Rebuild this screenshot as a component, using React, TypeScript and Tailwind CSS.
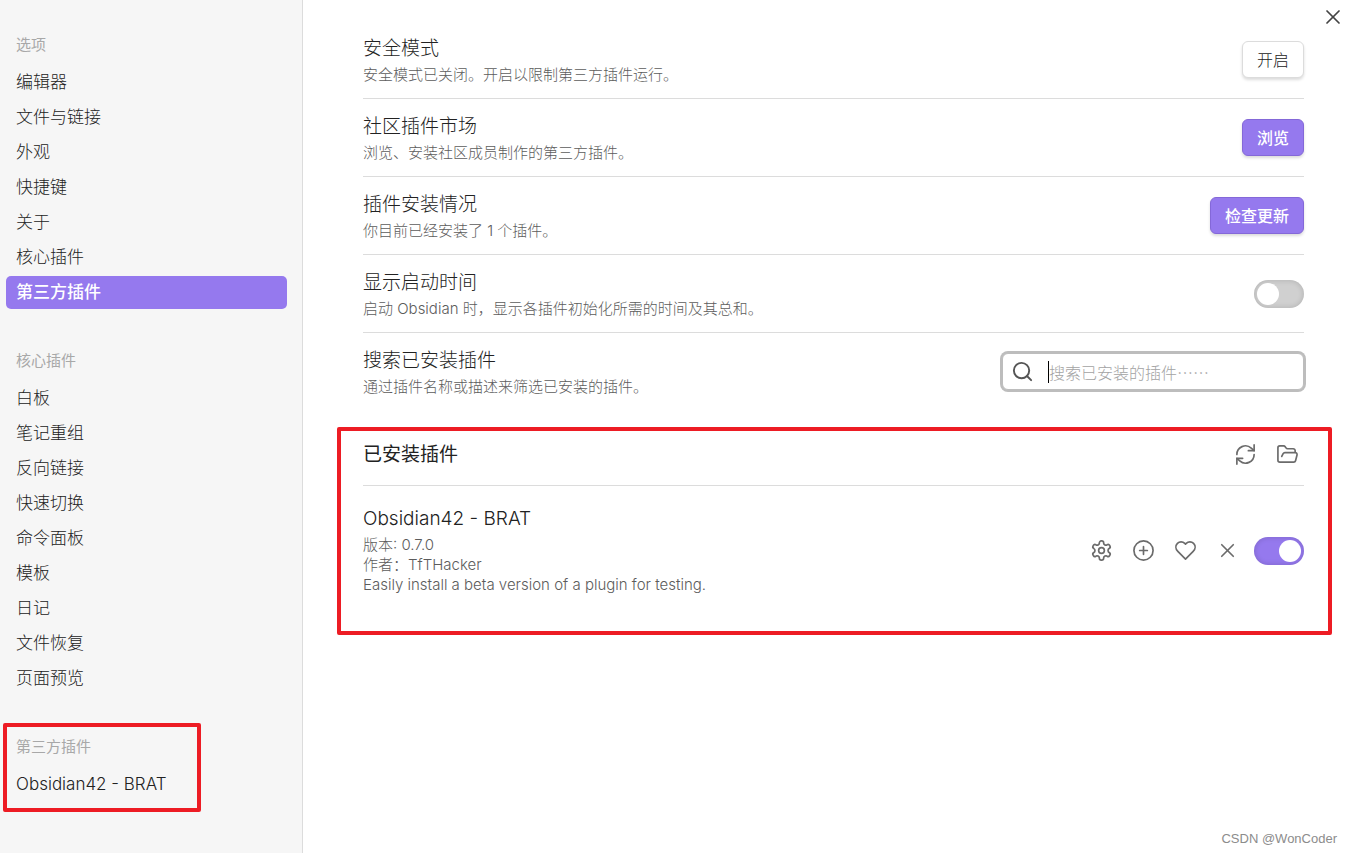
import { useState } from "react";
import type { ReactNode } from "react";
import { CirclePlus, Search, X } from "lucide-react";

const optionTabs = ["编辑器", "文件与链接", "外观", "快捷键", "关于", "核心插件", "第三方插件"];
const coreTabs = ["白板", "笔记重组", "反向链接", "快速切换", "命令面板", "模板", "日记", "文件恢复", "页面预览"];

function NavItem({ label, active, onSelect }: { label: string; active: boolean; onSelect: () => void }) {
  return (
    <li>
      <button
        type="button"
        onClick={onSelect}
        className={
          active
            ? "block h-[33px] w-full rounded-[5px] bg-[#9579ee] px-[10px] text-left text-[17px] leading-[33px] font-medium text-white"
            : "block h-[33px] w-full rounded-[5px] px-[10px] text-left text-[17px] leading-[33px] text-[#222222]"
        }
      >
        {label}
      </button>
    </li>
  );
}

function NavTitle({ children }: { children: ReactNode }) {
  return <h2 className="mb-[9px] px-[10px] text-[15px] leading-6 font-normal text-[#a8a8a8]">{children}</h2>;
}

function SettingRow({
  title,
  desc,
  last,
  children,
}: {
  title: string;
  desc: string;
  last?: boolean;
  children: ReactNode;
}) {
  return (
    <div className={last ? "flex items-center gap-4" : "flex items-center gap-4 border-b border-[#dcdcdc]"}>
      <div className="min-w-0 flex-1 pt-4 pb-[11px]">
        <h3 className="text-[19px] leading-6 font-light text-[#222222]">{title}</h3>
        <p className="mt-[2px] text-[15px] leading-6 text-[#5c5c5c]">{desc}</p>
      </div>
      {children}
    </div>
  );
}

function Toggle({ label, checked, onChange }: { label: string; checked: boolean; onChange: (v: boolean) => void }) {
  return (
    <label className="relative block h-7 w-[50px] shrink-0">
      <input
        type="checkbox"
        role="switch"
        aria-label={label}
        checked={checked}
        onChange={(e) => onChange(e.target.checked)}
        className="block h-7 w-[50px] appearance-none rounded-full bg-[#d0d0d0] shadow-[inset_0_0_5px_1px_rgba(0,0,0,0.12)] checked:bg-[#9579ee]"
      />
      <span
        className={
          checked
            ? "pointer-events-none absolute top-[3px] left-[25px] h-[22px] w-[22px] rounded-full bg-white"
            : "pointer-events-none absolute top-[3px] left-[3px] h-[22px] w-[22px] rounded-full bg-white"
        }
      />
    </label>
  );
}

function IconButton({ label, children }: { label: string; children: ReactNode }) {
  return (
    <button type="button" aria-label={label} className="flex h-[30px] w-[30px] items-center justify-center text-[#6b6b6b]">
      {children}
    </button>
  );
}

function Glyph({ children }: { children: ReactNode }) {
  return (
    <svg
      viewBox="0 0 24 24"
      className="h-[23px] w-[23px]"
      fill="none"
      stroke="currentColor"
      strokeWidth={1.75}
      strokeLinecap="round"
      strokeLinejoin="round"
      aria-hidden="true"
    >
      {children}
    </svg>
  );
}

const ctaClass =
  "h-[37px] shrink-0 rounded-[6px] border border-[#8468d8] bg-[#9579ee] px-[14px] text-[16px] leading-6 font-medium text-white shadow-[0_2px_3px_rgba(0,0,0,0.14)]";

export default function App() {
  const [tab, setTab] = useState("第三方插件");
  const [startup, setStartup] = useState(false);
  const [brat, setBrat] = useState(true);
  const [query, setQuery] = useState("");

  return (
    <div className="relative flex min-h-screen bg-white font-['Inter','Noto_Sans_CJK_SC',sans-serif] font-light text-[#222222]">
      <nav className="w-[303px] shrink-0 border-r border-[#dcdcdc] bg-[#f6f6f6] pt-[33px] pr-[15px] pl-[6px]">
        <section>
          <NavTitle>选项</NavTitle>
          <ul className="flex flex-col gap-[2px]">
            {optionTabs.map((t) => (
              <NavItem key={t} label={t} active={tab === t} onSelect={() => setTab(t)} />
            ))}
          </ul>
        </section>
        <section className="mt-10">
          <NavTitle>核心插件</NavTitle>
          <ul className="flex flex-col gap-[2px]">
            {coreTabs.map((t) => (
              <NavItem key={t} label={t} active={tab === t} onSelect={() => setTab(t)} />
            ))}
          </ul>
        </section>
        <section className="relative mt-10">
          <div className="pointer-events-none absolute -top-3 -left-[3px] h-[89px] w-[198px] rounded-[2px] border-4 border-[#ed1c24]" />
          <NavTitle>第三方插件</NavTitle>
          <ul>
            <NavItem label="Obsidian42 - BRAT" active={tab === "brat"} onSelect={() => setTab("brat")} />
          </ul>
        </section>
      </nav>

      <main className="min-w-0 flex-1 pt-[21px] pr-12 pl-[60px]">
        <SettingRow title="安全模式" desc="安全模式已关闭。开启以限制第三方插件运行。">
          <button
            type="button"
            className="h-[37px] shrink-0 rounded-[6px] border border-[#dcdcdc] bg-white px-[14px] text-[16px] leading-6 shadow-[0_2px_3px_rgba(0,0,0,0.14)]"
          >
            开启
          </button>
        </SettingRow>
        <SettingRow title="社区插件市场" desc="浏览、安装社区成员制作的第三方插件。">
          <button type="button" className={ctaClass}>
            浏览
          </button>
        </SettingRow>
        <SettingRow title="插件安装情况" desc="你目前已经安装了 1 个插件。">
          <button type="button" className={ctaClass}>
            检查更新
          </button>
        </SettingRow>
        <SettingRow title="显示启动时间" desc="启动 Obsidian 时，显示各插件初始化所需的时间及其总和。">
          <Toggle label="显示启动时间" checked={startup} onChange={setStartup} />
        </SettingRow>
        <SettingRow title="搜索已安装插件" desc="通过插件名称或描述来筛选已安装的插件。" last>
          <label className="flex h-[37px] w-[302px] shrink-0 items-center rounded-[6px] border border-[#bdbdbd] bg-white pl-2 shadow-[0_0_0_2px_#bdbdbd]">
            <Search className="h-[23px] w-[23px] shrink-0 text-[#555555]" strokeWidth={2} />
            <span className="ml-[14px] h-[22px] w-px shrink-0 bg-black" />
            <input
              type="text"
              aria-label="搜索已安装插件"
              placeholder="搜索已安装的插件……"
              value={query}
              onChange={(e) => setQuery(e.target.value)}
              className="min-w-0 flex-1 bg-transparent font-['Noto_Sans_CJK_SC',sans-serif] text-[16px] leading-6 outline-none placeholder:text-[#a3a3a3]"
            />
          </label>
        </SettingRow>

        <section className="relative mt-[14px] pt-[15px]">
          <div className="pointer-events-none absolute top-[3px] -right-7 -left-[26px] h-[208px] rounded-[2px] border-4 border-[#ed1c24]" />
          <div className="flex h-[47px] items-start gap-3 border-b border-[#dcdcdc] pr-[2px]">
            <h3 className="flex-1 text-[19px] leading-8 font-normal">已安装插件</h3>
            <IconButton label="重新加载插件">
              <Glyph>
                <path d="M21 2v6h-6" />
                <path d="M3 12a9 9 0 0 1 15-6.7L21 8" />
                <path d="M3 22v-6h6" />
                <path d="M21 12a9 9 0 0 1-15 6.7L3 16" />
              </Glyph>
            </IconButton>
            <IconButton label="打开插件文件夹">
              <Glyph>
                <path d="m6 14 1.45-2.9A2 2 0 0 1 9.24 10H20a2 2 0 0 1 1.94 2.5l-1.55 6a2 2 0 0 1-1.94 1.5H4a2 2 0 0 1-2-2V5c0-1.1.9-2 2-2h3.93a2 2 0 0 1 1.66.9l.82 1.2a2 2 0 0 0 1.66.9H18a2 2 0 0 1 2 2v2" />
              </Glyph>
            </IconButton>
          </div>
          <div className="flex items-center gap-3 pt-5">
            <div className="min-w-0 flex-1">
              <h4 className="text-[19px] leading-[26px] font-light">Obsidian42 - BRAT</h4>
              <div className="mt-[3px] text-[15px] leading-5 text-[#5c5c5c]">
                <p>版本: 0.7.0</p>
                <p>作者：TfTHacker</p>
                <p>Easily install a beta version of a plugin for testing.</p>
              </div>
            </div>
            <IconButton label="设置">
              <Glyph>
                <path d="M12.22 2h-.44a2 2 0 0 0-2 2v.18a2 2 0 0 1-1 1.73l-.43.25a2 2 0 0 1-2 0l-.15-.08a2 2 0 0 0-2.73.73l-.22.38a2 2 0 0 0 .73 2.73l.15.1a2 2 0 0 1 1 1.72v.51a2 2 0 0 1-1 1.74l-.15.09a2 2 0 0 0-.73 2.73l.22.38a2 2 0 0 0 2.73.73l.15-.08a2 2 0 0 1 2 0l.43.25a2 2 0 0 1 1 1.73V20a2 2 0 0 0 2 2h.44a2 2 0 0 0 2-2v-.18a2 2 0 0 1 1-1.73l.43-.25a2 2 0 0 1 2 0l.15.08a2 2 0 0 0 2.73-.73l.22-.39a2 2 0 0 0-.73-2.73l-.15-.08a2 2 0 0 1-1-1.74v-.5a2 2 0 0 1 1-1.74l.15-.09a2 2 0 0 0 .73-2.73l-.22-.38a2 2 0 0 0-2.73-.73l-.15.08a2 2 0 0 1-2 0l-.43-.25a2 2 0 0 1-1-1.73V4a2 2 0 0 0-2-2z" />
                <circle cx="12" cy="12" r="3" />
              </Glyph>
            </IconButton>
            <IconButton label="快捷键">
              <CirclePlus className="h-[23px] w-[23px]" strokeWidth={1.75} />
            </IconButton>
            <IconButton label="赞助">
              <Glyph>
                <path d="M20.42 4.58a5.4 5.4 0 0 0-7.65 0l-.77.78-.77-.78a5.4 5.4 0 0 0-7.65 0C1.46 6.7 1.33 10.28 4 13l8 8 8-8c2.67-2.72 2.54-6.3.42-8.42z" />
              </Glyph>
            </IconButton>
            <IconButton label="卸载">
              <X className="h-[23px] w-[23px]" strokeWidth={1.75} />
            </IconButton>
            <Toggle label="启用 Obsidian42 - BRAT" checked={brat} onChange={setBrat} />
          </div>
        </section>
      </main>

      <button
        type="button"
        aria-label="关闭"
        className="absolute top-[5px] right-[7px] flex h-6 w-6 items-center justify-center text-[#444444]"
      >
        <X className="h-6 w-6" strokeWidth={1.75} />
      </button>
      <p className="absolute right-[15px] bottom-1 font-['Liberation_Sans',sans-serif] text-[13px] leading-5 font-normal text-[#8c8c8c]">
        CSDN @WonCoder
      </p>
    </div>
  );
}
